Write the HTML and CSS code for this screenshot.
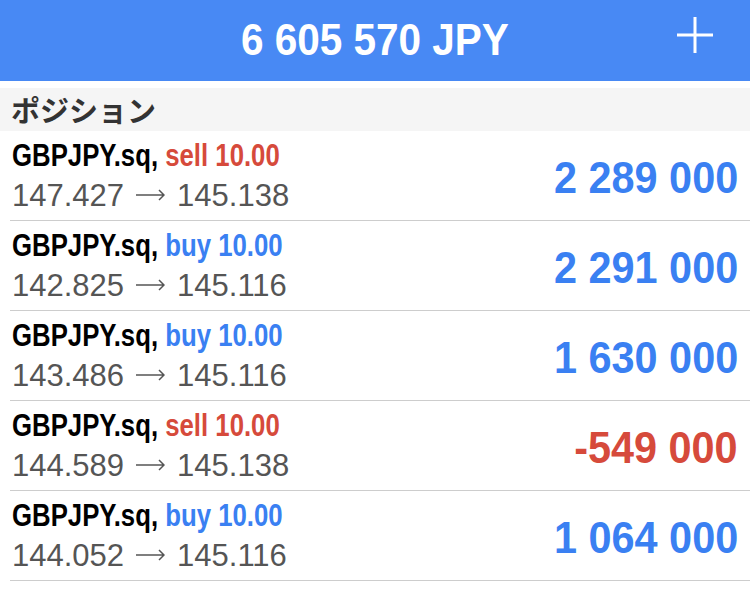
FILE: index.html
```html
<!DOCTYPE html>
<html lang="ja">
<head>
    <meta charset="UTF-8">
    <meta name="viewport" content="width=device-width, initial-scale=1.0">
    <title>ポジション</title>
    <link rel="stylesheet" href="styles.css">
</head>
<body>
    <header class="top-bar">
        <h1 class="balance">6 605 570 JPY</h1>
        <svg class="add-icon" width="38" height="38" viewBox="0 0 38 38">
            <path d="M19 1 V37 M1 19 H37" stroke="#fff" stroke-width="3" fill="none"/>
        </svg>
    </header>

    <div class="section-title">ポジション</div>

    <ul class="positions">
        <li class="row">
            <div class="info">
                <div class="symbol">GBPJPY.sq, <span class="sell">sell 10.00</span></div>
                <div class="prices">147.427<svg class="arrow" width="29" height="12" viewBox="0 0 29 12"><path d="M0 6 H28 M23 1 L28 6 L23 11" stroke="#555" stroke-width="1.5" fill="none"/></svg>145.138</div>
            </div>
            <div class="profit up">2 289 000</div>
        </li>
        <li class="row">
            <div class="info">
                <div class="symbol">GBPJPY.sq, <span class="buy">buy 10.00</span></div>
                <div class="prices">142.825<svg class="arrow" width="29" height="12" viewBox="0 0 29 12"><path d="M0 6 H28 M23 1 L28 6 L23 11" stroke="#555" stroke-width="1.5" fill="none"/></svg>145.116</div>
            </div>
            <div class="profit up">2 291 000</div>
        </li>
        <li class="row">
            <div class="info">
                <div class="symbol">GBPJPY.sq, <span class="buy">buy 10.00</span></div>
                <div class="prices">143.486<svg class="arrow" width="29" height="12" viewBox="0 0 29 12"><path d="M0 6 H28 M23 1 L28 6 L23 11" stroke="#555" stroke-width="1.5" fill="none"/></svg>145.116</div>
            </div>
            <div class="profit up">1 630 000</div>
        </li>
        <li class="row">
            <div class="info">
                <div class="symbol">GBPJPY.sq, <span class="sell">sell 10.00</span></div>
                <div class="prices">144.589<svg class="arrow" width="29" height="12" viewBox="0 0 29 12"><path d="M0 6 H28 M23 1 L28 6 L23 11" stroke="#555" stroke-width="1.5" fill="none"/></svg>145.138</div>
            </div>
            <div class="profit down">-549 000</div>
        </li>
        <li class="row">
            <div class="info">
                <div class="symbol">GBPJPY.sq, <span class="buy">buy 10.00</span></div>
                <div class="prices">144.052<svg class="arrow" width="29" height="12" viewBox="0 0 29 12"><path d="M0 6 H28 M23 1 L28 6 L23 11" stroke="#555" stroke-width="1.5" fill="none"/></svg>145.116</div>
            </div>
            <div class="profit up">1 064 000</div>
        </li>
    </ul>
</body>
</html>
```

FILE: styles.css
```css
body {
    margin: 0;
    background: #fff;
    font-family: "Liberation Sans", Arial, sans-serif;
    overflow: hidden;
}
.top-bar {
    position: relative;
    height: 81px;
    background: #4889f4;
    display: flex;
    justify-content: center;
    align-items: center;
}
/* no condensed face installed, so bold Liberation Sans gets squeezed */
.balance {
    margin: 0 0 2px;
    color: #fff;
    font-weight: bold;
    font-size: 45px;
    line-height: 45px;
    transform: scaleX(0.9);
}
.add-icon {
    position: absolute;
    right: 36px;
    top: 16px;
}
.section-title {
    margin-top: 7px;
    height: 43px;
    background: #f5f5f5;
    color: #333;
    font-family: "Noto Sans CJK JP", sans-serif;
    font-weight: bold;
    font-size: 29px;
    line-height: 43px;
    padding-left: 11px;
}
.positions {
    list-style: none;
    margin: 0;
    padding: 0;
}
.row {
    display: flex;
    justify-content: space-between;
    align-items: flex-start;
    height: 89px;
    margin-left: 10px;
    padding: 0 12px 0 2px;
    border-bottom: 1px solid #cdcdcd;
}
.info {
    padding-top: 6px;
}
.symbol {
    font-weight: bold;
    font-size: 32px;
    line-height: 36px;
    color: #000;
    white-space: nowrap;
    transform: scaleX(0.805);
    transform-origin: left center;
}
.sell {
    color: #d64a3b;
}
.buy {
    color: #3a80f2;
}
.prices {
    font-size: 31px;
    line-height: 46px;
    color: #555;
    white-space: nowrap;
}
.arrow {
    margin: 0 12px;
    vertical-align: 5px;
}
.profit {
    padding-top: 24px;
    font-weight: bold;
    font-size: 45px;
    line-height: 45px;
    white-space: nowrap;
    transform: scaleX(0.92);
    transform-origin: right center;
}
.profit.up {
    color: #3a80f2;
}
.profit.down {
    color: #d64a3b;
}
```
